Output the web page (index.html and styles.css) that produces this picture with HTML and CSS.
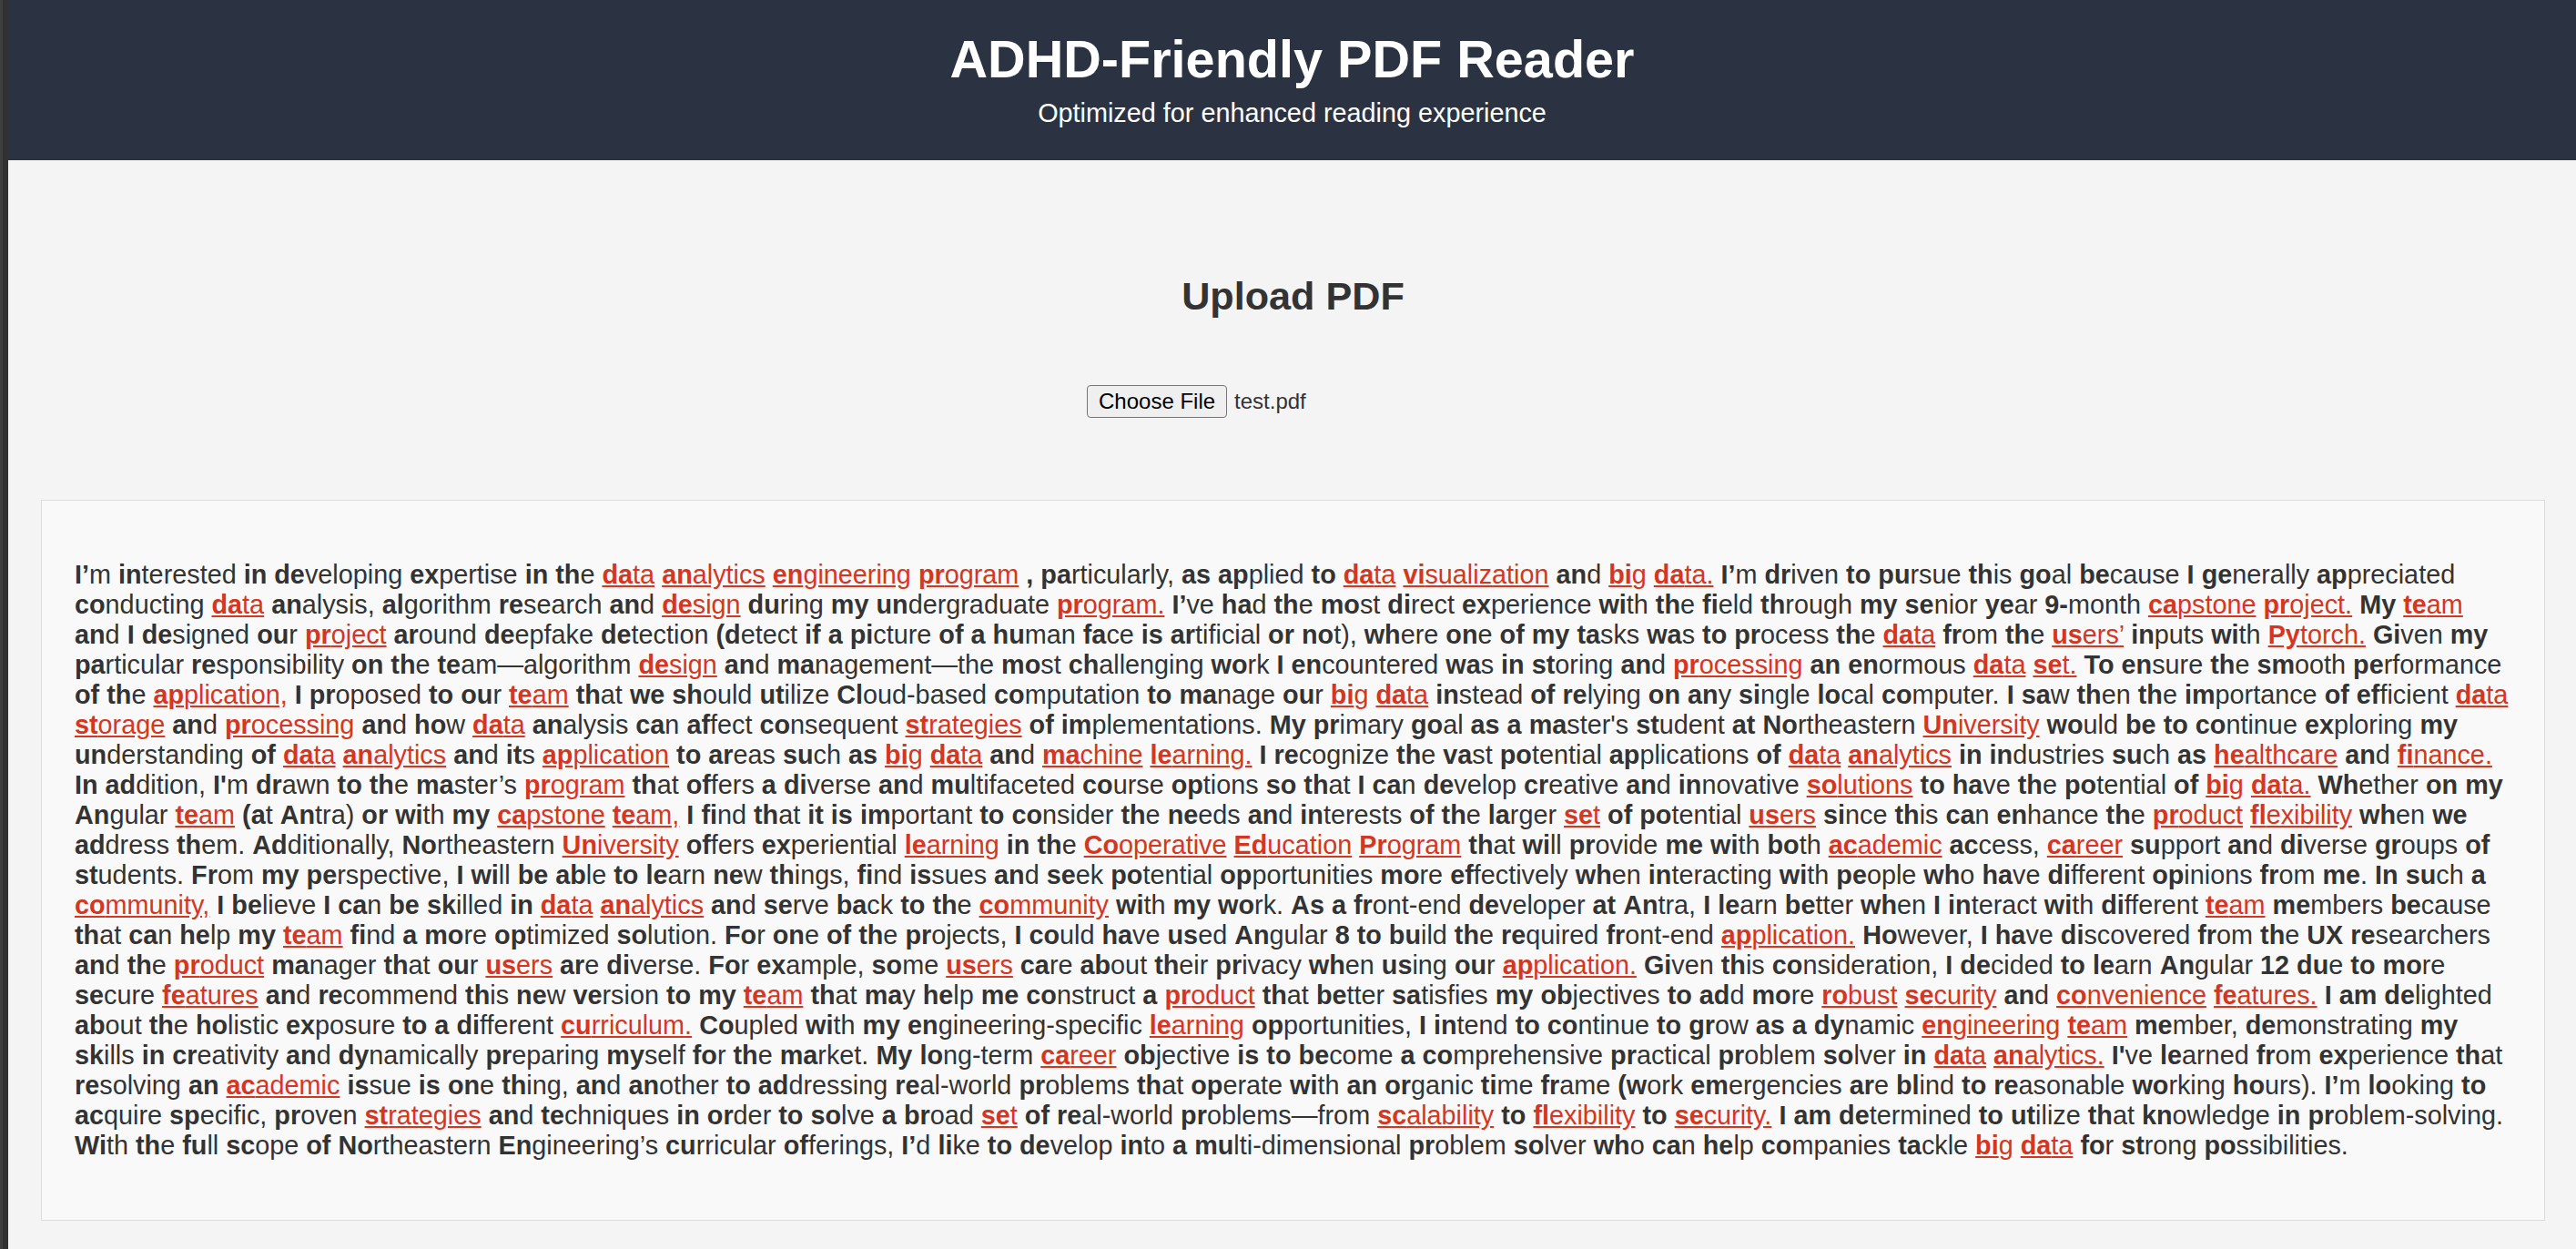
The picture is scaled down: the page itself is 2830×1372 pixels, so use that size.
FILE: index.html
```html
<!DOCTYPE html>
<html lang="en">
<head>
<meta charset="utf-8">
<title>ADHD-Friendly PDF Reader</title>
<link rel="stylesheet" href="styles.css">
</head>
<body>
<div class="window-edge"></div>
<div class="app">
  <header class="app-header">
    <h1 class="app-title">ADHD-Friendly PDF Reader</h1>
    <p class="app-subtitle">Optimized for enhanced reading experience</p>
  </header>
  <main class="content">
    <section class="upload">
      <h2 class="upload-title">Upload PDF</h2>
      <div class="file-picker">
        <button class="file-button" type="button">Choose File</button>
        <span class="file-name">test.pdf</span>
      </div>
    </section>
    <section class="reader">
      <p class="reader-text"><b>I’</b>m <b>in</b>terested <b>in</b> <b>de</b>veloping <b>ex</b>pertise <b>in</b> <b>th</b>e <u class="k"><b>da</b>ta</u> <u class="k"><b>an</b>alytics</u> <u class="k"><b>en</b>gineering</u> <u class="k"><b>pr</b>ogram</u> <b>,</b> <b>pa</b>rticularly, <b>as</b> <b>ap</b>plied <b>to</b> <u class="k"><b>da</b>ta</u> <u class="k"><b>vi</b>sualization</u> <b>an</b>d <u class="k"><b>bi</b>g</u> <u class="k"><b>da</b>ta.</u> <b>I’</b>m <b>dr</b>iven <b>to</b> <b>pu</b>rsue <b>th</b>is <b>go</b>al <b>be</b>cause <b>I</b> <b>ge</b>nerally <b>ap</b>preciated <b>co</b>nducting <u class="k"><b>da</b>ta</u> <b>an</b>alysis, <b>al</b>gorithm <b>re</b>search <b>an</b>d <u class="k"><b>de</b>sign</u> <b>du</b>ring <b>my</b> <b>un</b>dergraduate <u class="k"><b>pr</b>ogram.</u> <b>I’</b>ve <b>ha</b>d <b>th</b>e <b>mo</b>st <b>di</b>rect <b>ex</b>perience <b>wi</b>th <b>th</b>e <b>fi</b>eld <b>th</b>rough <b>my</b> <b>se</b>nior <b>ye</b>ar <b>9-</b>month <u class="k"><b>ca</b>pstone</u> <u class="k"><b>pr</b>oject.</u> <b>My</b> <u class="k"><b>te</b>am</u> <b>an</b>d <b>I</b> <b>de</b>signed <b>ou</b>r <u class="k"><b>pr</b>oject</u> <b>ar</b>ound <b>de</b>epfake <b>de</b>tection <b>(d</b>etect <b>if</b> <b>a</b> <b>pi</b>cture <b>of</b> <b>a</b> <b>hu</b>man <b>fa</b>ce <b>is</b> <b>ar</b>tificial <b>or</b> <b>no</b>t), <b>wh</b>ere <b>on</b>e <b>of</b> <b>my</b> <b>ta</b>sks <b>wa</b>s <b>to</b> <b>pr</b>ocess <b>th</b>e <u class="k"><b>da</b>ta</u> <b>fr</b>om <b>th</b>e <u class="k"><b>us</b>ers’</u> <b>in</b>puts <b>wi</b>th <u class="k"><b>Py</b>torch.</u> <b>Gi</b>ven <b>my</b> <b>pa</b>rticular <b>re</b>sponsibility <b>on</b> <b>th</b>e <b>te</b>am—algorithm <u class="k"><b>de</b>sign</u> <b>an</b>d <b>ma</b>nagement—the <b>mo</b>st <b>ch</b>allenging <b>wo</b>rk <b>I</b> <b>en</b>countered <b>wa</b>s <b>in</b> <b>st</b>oring <b>an</b>d <u class="k"><b>pr</b>ocessing</u> <b>an</b> <b>en</b>ormous <u class="k"><b>da</b>ta</u> <u class="k"><b>se</b>t.</u> <b>To</b> <b>en</b>sure <b>th</b>e <b>sm</b>ooth <b>pe</b>rformance <b>of</b> <b>th</b>e <u class="k"><b>ap</b>plication,</u> <b>I</b> <b>pr</b>oposed <b>to</b> <b>ou</b>r <u class="k"><b>te</b>am</u> <b>th</b>at <b>we</b> <b>sh</b>ould <b>ut</b>ilize <b>Cl</b>oud-based <b>co</b>mputation <b>to</b> <b>ma</b>nage <b>ou</b>r <u class="k"><b>bi</b>g</u> <u class="k"><b>da</b>ta</u> <b>in</b>stead <b>of</b> <b>re</b>lying <b>on</b> <b>an</b>y <b>si</b>ngle <b>lo</b>cal <b>co</b>mputer. <b>I</b> <b>sa</b>w <b>th</b>en <b>th</b>e <b>im</b>portance <b>of</b> <b>ef</b>ficient <u class="k"><b>da</b>ta</u> <u class="k"><b>st</b>orage</u> <b>an</b>d <u class="k"><b>pr</b>ocessing</u> <b>an</b>d <b>ho</b>w <u class="k"><b>da</b>ta</u> <b>an</b>alysis <b>ca</b>n <b>af</b>fect <b>co</b>nsequent <u class="k"><b>st</b>rategies</u> <b>of</b> <b>im</b>plementations. <b>My</b> <b>pr</b>imary <b>go</b>al <b>as</b> <b>a</b> <b>ma</b>ster's <b>st</b>udent <b>at</b> <b>No</b>rtheastern <u class="k"><b>Un</b>iversity</u> <b>wo</b>uld <b>be</b> <b>to</b> <b>co</b>ntinue <b>ex</b>ploring <b>my</b> <b>un</b>derstanding <b>of</b> <u class="k"><b>da</b>ta</u> <u class="k"><b>an</b>alytics</u> <b>an</b>d <b>it</b>s <u class="k"><b>ap</b>plication</u> <b>to</b> <b>ar</b>eas <b>su</b>ch <b>as</b> <u class="k"><b>bi</b>g</u> <u class="k"><b>da</b>ta</u> <b>an</b>d <u class="k"><b>ma</b>chine</u> <u class="k"><b>le</b>arning.</u> <b>I</b> <b>re</b>cognize <b>th</b>e <b>va</b>st <b>po</b>tential <b>ap</b>plications <b>of</b> <u class="k"><b>da</b>ta</u> <u class="k"><b>an</b>alytics</u> <b>in</b> <b>in</b>dustries <b>su</b>ch <b>as</b> <u class="k"><b>he</b>althcare</u> <b>an</b>d <u class="k"><b>fi</b>nance.</u> <b>In</b> <b>ad</b>dition, <b>I'</b>m <b>dr</b>awn <b>to</b> <b>th</b>e <b>ma</b>ster’s <u class="k"><b>pr</b>ogram</u> <b>th</b>at <b>of</b>fers <b>a</b> <b>di</b>verse <b>an</b>d <b>mu</b>ltifaceted <b>co</b>urse <b>op</b>tions <b>so</b> <b>th</b>at <b>I</b> <b>ca</b>n <b>de</b>velop <b>cr</b>eative <b>an</b>d <b>in</b>novative <u class="k"><b>so</b>lutions</u> <b>to</b> <b>ha</b>ve <b>th</b>e <b>po</b>tential <b>of</b> <u class="k"><b>bi</b>g</u> <u class="k"><b>da</b>ta.</u> <b>Wh</b>ether <b>on</b> <b>my</b> <b>An</b>gular <u class="k"><b>te</b>am</u> <b>(a</b>t <b>An</b>tra) <b>or</b> <b>wi</b>th <b>my</b> <u class="k"><b>ca</b>pstone</u> <u class="k"><b>te</b>am,</u> <b>I</b> <b>fi</b>nd <b>th</b>at <b>it</b> <b>is</b> <b>im</b>portant <b>to</b> <b>co</b>nsider <b>th</b>e <b>ne</b>eds <b>an</b>d <b>in</b>terests <b>of</b> <b>th</b>e <b>la</b>rger <u class="k"><b>se</b>t</u> <b>of</b> <b>po</b>tential <u class="k"><b>us</b>ers</u> <b>si</b>nce <b>th</b>is <b>ca</b>n <b>en</b>hance <b>th</b>e <u class="k"><b>pr</b>oduct</u> <u class="k"><b>fl</b>exibility</u> <b>wh</b>en <b>we</b> <b>ad</b>dress <b>th</b>em. <b>Ad</b>ditionally, <b>No</b>rtheastern <u class="k"><b>Un</b>iversity</u> <b>of</b>fers <b>ex</b>periential <u class="k"><b>le</b>arning</u> <b>in</b> <b>th</b>e <u class="k"><b>Co</b>operative</u> <u class="k"><b>Ed</b>ucation</u> <u class="k"><b>Pr</b>ogram</u> <b>th</b>at <b>wi</b>ll <b>pr</b>ovide <b>me</b> <b>wi</b>th <b>bo</b>th <u class="k"><b>ac</b>ademic</u> <b>ac</b>cess, <u class="k"><b>ca</b>reer</u> <b>su</b>pport <b>an</b>d <b>di</b>verse <b>gr</b>oups <b>of</b> <b>st</b>udents. <b>Fr</b>om <b>my</b> <b>pe</b>rspective, <b>I</b> <b>wi</b>ll <b>be</b> <b>ab</b>le <b>to</b> <b>le</b>arn <b>ne</b>w <b>th</b>ings, <b>fi</b>nd <b>is</b>sues <b>an</b>d <b>se</b>ek <b>po</b>tential <b>op</b>portunities <b>mo</b>re <b>ef</b>fectively <b>wh</b>en <b>in</b>teracting <b>wi</b>th <b>pe</b>ople <b>wh</b>o <b>ha</b>ve <b>di</b>fferent <b>op</b>inions <b>fr</b>om <b>me</b>. <b>In</b> <b>su</b>ch <b>a</b> <u class="k"><b>co</b>mmunity,</u> <b>I</b> <b>be</b>lieve <b>I</b> <b>ca</b>n <b>be</b> <b>sk</b>illed <b>in</b> <u class="k"><b>da</b>ta</u> <u class="k"><b>an</b>alytics</u> <b>an</b>d <b>se</b>rve <b>ba</b>ck <b>to</b> <b>th</b>e <u class="k"><b>co</b>mmunity</u> <b>wi</b>th <b>my</b> <b>wo</b>rk. <b>As</b> <b>a</b> <b>fr</b>ont-end <b>de</b>veloper <b>at</b> <b>An</b>tra, <b>I</b> <b>le</b>arn <b>be</b>tter <b>wh</b>en <b>I</b> <b>in</b>teract <b>wi</b>th <b>di</b>fferent <u class="k"><b>te</b>am</u> <b>me</b>mbers <b>be</b>cause <b>th</b>at <b>ca</b>n <b>he</b>lp <b>my</b> <u class="k"><b>te</b>am</u> <b>fi</b>nd <b>a</b> <b>mo</b>re <b>op</b>timized <b>so</b>lution. <b>Fo</b>r <b>on</b>e <b>of</b> <b>th</b>e <b>pr</b>ojects, <b>I</b> <b>co</b>uld <b>ha</b>ve <b>us</b>ed <b>An</b>gular <b>8</b> <b>to</b> <b>bu</b>ild <b>th</b>e <b>re</b>quired <b>fr</b>ont-end <u class="k"><b>ap</b>plication.</u> <b>Ho</b>wever, <b>I</b> <b>ha</b>ve <b>di</b>scovered <b>fr</b>om <b>th</b>e <b>UX</b> <b>re</b>searchers <b>an</b>d <b>th</b>e <u class="k"><b>pr</b>oduct</u> <b>ma</b>nager <b>th</b>at <b>ou</b>r <u class="k"><b>us</b>ers</u> <b>ar</b>e <b>di</b>verse. <b>Fo</b>r <b>ex</b>ample, <b>so</b>me <u class="k"><b>us</b>ers</u> <b>ca</b>re <b>ab</b>out <b>th</b>eir <b>pr</b>ivacy <b>wh</b>en <b>us</b>ing <b>ou</b>r <u class="k"><b>ap</b>plication.</u> <b>Gi</b>ven <b>th</b>is <b>co</b>nsideration, <b>I</b> <b>de</b>cided <b>to</b> <b>le</b>arn <b>An</b>gular <b>12</b> <b>du</b>e <b>to</b> <b>mo</b>re <b>se</b>cure <u class="k"><b>fe</b>atures</u> <b>an</b>d <b>re</b>commend <b>th</b>is <b>ne</b>w <b>ve</b>rsion <b>to</b> <b>my</b> <u class="k"><b>te</b>am</u> <b>th</b>at <b>ma</b>y <b>he</b>lp <b>me</b> <b>co</b>nstruct <b>a</b> <u class="k"><b>pr</b>oduct</u> <b>th</b>at <b>be</b>tter <b>sa</b>tisfies <b>my</b> <b>ob</b>jectives <b>to</b> <b>ad</b>d <b>mo</b>re <u class="k"><b>ro</b>bust</u> <u class="k"><b>se</b>curity</u> <b>an</b>d <u class="k"><b>co</b>nvenience</u> <u class="k"><b>fe</b>atures.</u> <b>I</b> <b>am</b> <b>de</b>lighted <b>ab</b>out <b>th</b>e <b>ho</b>listic <b>ex</b>posure <b>to</b> <b>a</b> <b>di</b>fferent <u class="k"><b>cu</b>rriculum.</u> <b>Co</b>upled <b>wi</b>th <b>my</b> <b>en</b>gineering-specific <u class="k"><b>le</b>arning</u> <b>op</b>portunities, <b>I</b> <b>in</b>tend <b>to</b> <b>co</b>ntinue <b>to</b> <b>gr</b>ow <b>as</b> <b>a</b> <b>dy</b>namic <u class="k"><b>en</b>gineering</u> <u class="k"><b>te</b>am</u> <b>me</b>mber, <b>de</b>monstrating <b>my</b> <b>sk</b>ills <b>in</b> <b>cr</b>eativity <b>an</b>d <b>dy</b>namically <b>pr</b>eparing <b>my</b>self <b>fo</b>r <b>th</b>e <b>ma</b>rket. <b>My</b> <b>lo</b>ng-term <u class="k"><b>ca</b>reer</u> <b>ob</b>jective <b>is</b> <b>to</b> <b>be</b>come <b>a</b> <b>co</b>mprehensive <b>pr</b>actical <b>pr</b>oblem <b>so</b>lver <b>in</b> <u class="k"><b>da</b>ta</u> <u class="k"><b>an</b>alytics.</u> <b>I'</b>ve <b>le</b>arned <b>fr</b>om <b>ex</b>perience <b>th</b>at <b>re</b>solving <b>an</b> <u class="k"><b>ac</b>ademic</u> <b>is</b>sue <b>is</b> <b>on</b>e <b>th</b>ing, <b>an</b>d <b>an</b>other <b>to</b> <b>ad</b>dressing <b>re</b>al-world <b>pr</b>oblems <b>th</b>at <b>op</b>erate <b>wi</b>th <b>an</b> <b>or</b>ganic <b>ti</b>me <b>fr</b>ame <b>(w</b>ork <b>em</b>ergencies <b>ar</b>e <b>bl</b>ind <b>to</b> <b>re</b>asonable <b>wo</b>rking <b>ho</b>urs). <b>I’</b>m <b>lo</b>oking <b>to</b> <b>ac</b>quire <b>sp</b>ecific, <b>pr</b>oven <u class="k"><b>st</b>rategies</u> <b>an</b>d <b>te</b>chniques <b>in</b> <b>or</b>der <b>to</b> <b>so</b>lve <b>a</b> <b>br</b>oad <u class="k"><b>se</b>t</u> <b>of</b> <b>re</b>al-world <b>pr</b>oblems—from <u class="k"><b>sc</b>alability</u> <b>to</b> <u class="k"><b>fl</b>exibility</u> <b>to</b> <u class="k"><b>se</b>curity.</u> <b>I</b> <b>am</b> <b>de</b>termined <b>to</b> <b>ut</b>ilize <b>th</b>at <b>kn</b>owledge <b>in</b> <b>pr</b>oblem-solving. <b>Wi</b>th <b>th</b>e <b>fu</b>ll <b>sc</b>ope <b>of</b> <b>No</b>rtheastern <b>En</b>gineering’s <b>cu</b>rricular <b>of</b>ferings, <b>I’</b>d <b>li</b>ke <b>to</b> <b>de</b>velop <b>in</b>to <b>a</b> <b>mu</b>lti-dimensional <b>pr</b>oblem <b>so</b>lver <b>wh</b>o <b>ca</b>n <b>he</b>lp <b>co</b>mpanies <b>ta</b>ckle <u class="k"><b>bi</b>g</u> <u class="k"><b>da</b>ta</u> <b>fo</b>r <b>st</b>rong <b>po</b>ssibilities.</p>
    </section>
  </main>
</div>
</body>
</html>
```

FILE: styles.css
```css
* {
  box-sizing: border-box;
}

html,
body {
  margin: 0;
  min-height: 100%;
}

body {
  display: flex;
  min-height: 100vh;
  background: #f4f4f4;
  color: #333;
  font-family: "Liberation Sans", Arial, sans-serif;
}

.window-edge {
  flex: 0 0 9px;
  background: linear-gradient(to right, #3e3e3e 0 3px, #313131 3px 9px);
}

.app {
  flex: 1 1 auto;
  min-width: 0;
}

.app-header {
  height: 176px;
  padding-top: 32px;
  background: #2b3342;
  color: #fff;
  text-align: center;
}

.app-title {
  margin: 0 0 10px;
  font-size: 57.6px;
  font-weight: 700;
  line-height: normal;
}

.app-subtitle {
  margin: 0;
  font-size: 28.8px;
  line-height: normal;
}

.content {
  padding: 0 34px 30px 36px;
}

.upload {
  padding: 125px 0 90px;
  text-align: center;
}

.upload-title {
  margin: 0 0 73px;
  font-size: 43.2px;
  font-weight: 700;
  line-height: normal;
  color: #333;
}

.file-picker {
  display: flex;
  align-items: center;
  gap: 8px;
  width: 453px;
  height: 36px;
  margin: 0 auto;
}

.file-button {
  height: 36px;
  padding: 0 12px;
  font-family: "Liberation Sans", Arial, sans-serif;
  font-size: 24px;
  color: #000;
  background: #efefef;
  border: 1.5px solid #767676;
  border-radius: 4px;
}

.file-name {
  font-size: 24px;
  color: #333;
}

.reader {
  background: #f9f9f9;
  border: 1px solid #dcdcdc;
  padding: 36px;
}

.reader-text {
  margin: 28.8px 0;
  font-size: 28.8px;
  line-height: normal;
  color: #333;
}

.k {
  color: #d6361f;
  text-decoration: underline;
}
```
